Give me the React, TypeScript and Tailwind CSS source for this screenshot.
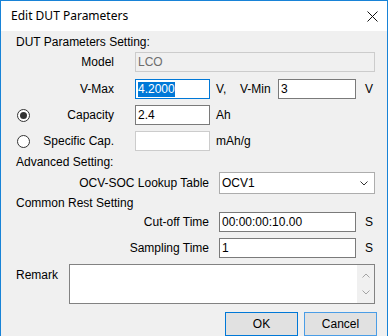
import React from "react";

const Radio = ({ checked }: { checked?: boolean }) => (
  <div className="w-[13px] h-[13px] rounded-full border border-[#333333] bg-white flex items-center justify-center shrink-0">
    {checked && <div className="w-[7px] h-[7px] rounded-full bg-[#333333]" />}
  </div>
);

const Input = ({
  w,
  children,
  disabled,
  focused,
  bg,
}: {
  w: string;
  children?: React.ReactNode;
  disabled?: boolean;
  focused?: boolean;
  bg?: string;
}) => (
  <div
    className={`${w} h-[20px] border flex items-center pl-[2px] shrink-0 ${
      focused ? "border-[#0078d7] bg-white" : disabled ? "border-[#cccccc]" : "border-[#7a7a7a] bg-white"
    } ${bg ?? ""}`}
  >
    {children}
  </div>
);

export default function App() {
  return (
    <div
      className="w-[388px] h-[336px] bg-[#f0f0f0] border-l border-r border-t border-[#1883d7] overflow-hidden flex flex-col text-[12px] text-black leading-[14px]"
      style={{ fontFamily: '"Liberation Sans", Arial, sans-serif' }}
    >
      {/* Title bar */}
      <div className="h-[30px] bg-white flex items-center justify-between shrink-0">
        <span
          className="pl-[10px] text-[12px] text-black"
          style={{ fontFamily: '"Noto Sans", "Open Sans", sans-serif' }}
        >
          Edit DUT Parameters
        </span>
        <svg width="11" height="11" viewBox="0 0 11 11" className="mr-[9px]">
          <path d="M0.5 0.5 L10.5 10.5 M10.5 0.5 L0.5 10.5" stroke="#111" strokeWidth="1" />
        </svg>
      </div>

      {/* Body */}
      <div className="flex flex-col">
        <div className="mt-[4px] h-[14px] pl-[15px]">DUT Parameters Setting:</div>

        {/* Model */}
        <div className="mt-[3px] h-[20px] flex items-center">
          <div className="w-[113px] text-right">Model</div>
          <div className="ml-[21px]">
            <Input w="w-[240px]" disabled>
              <span className="text-[#6d6d6d]">LCO</span>
            </Input>
          </div>
        </div>

        {/* V-Max */}
        <div className="mt-[7px] h-[20px] flex items-center">
          <div className="w-[113px] text-right">V-Max</div>
          <div className="ml-[21px]">
            <Input w="w-[75px]" focused>
              <span className="bg-[#0078d7] text-white leading-[15px] inline-block">4.2000</span>
            </Input>
          </div>
          <div className="ml-[6px] w-[24px]">V,</div>
          <div className="w-[38px]">V-Min</div>
          <Input w="w-[78px]">
            <span>3</span>
          </Input>
          <div className="ml-[9px]">V</div>
        </div>

        {/* Capacity */}
        <div className="mt-[6px] h-[20px] flex items-center">
          <div className="w-[113px] flex items-center pl-[16px]">
            <Radio checked />
            <div className="flex-1 text-right">Capacity</div>
          </div>
          <div className="ml-[21px]">
            <Input w="w-[75px]">
              <span>2.4</span>
            </Input>
          </div>
          <div className="ml-[6px]">Ah</div>
        </div>

        {/* Specific Cap */}
        <div className="mt-[6px] h-[20px] flex items-center">
          <div className="w-[113px] flex items-center pl-[16px]">
            <Radio />
            <div className="flex-1 text-right">Specific Cap.</div>
          </div>
          <div className="ml-[21px]">
            <Input w="w-[75px]" disabled bg="bg-white" />
          </div>
          <div className="ml-[6px]">mAh/g</div>
        </div>

        <div className="mt-[4px] h-[14px] pl-[15px]">Advanced Setting:</div>

        {/* OCV */}
        <div className="mt-[3px] h-[22px] flex items-center">
          <div className="w-[208px] text-right">OCV-SOC Lookup Table</div>
          <div className="ml-[10px] w-[156px] h-[22px] border border-[#adadad] bg-white flex items-center justify-between pl-[2px] pr-[6px]">
            <span>OCV1</span>
            <svg width="8" height="5" viewBox="0 0 8 5">
              <path d="M0.5 0.5 L4 4 L7.5 0.5" stroke="#333" strokeWidth="1" fill="none" />
            </svg>
          </div>
        </div>

        <div className="mt-[2px] h-[14px] pl-[15px]">Common Rest Setting</div>

        {/* Cut-off */}
        <div className="mt-[2px] h-[20px] flex items-center">
          <div className="w-[208px] text-right">Cut-off Time</div>
          <div className="ml-[10px]">
            <Input w="w-[137px]">
              <span>00:00:00:10.00</span>
            </Input>
          </div>
          <div className="ml-[9px]">S</div>
        </div>

        {/* Sampling */}
        <div className="mt-[6px] h-[20px] flex items-center">
          <div className="w-[208px] text-right">Sampling Time</div>
          <div className="ml-[10px]">
            <Input w="w-[137px]">
              <span>1</span>
            </Input>
          </div>
          <div className="ml-[9px]">S</div>
        </div>

        {/* Remark */}
        <div className="mt-[6px] h-[40px] flex">
          <div className="w-[68px] pl-[15px] pt-[4px]">Remark</div>
          <div className="w-[306px] h-[40px] border border-[#828282] bg-white flex justify-end">
            <div className="w-[17px] h-full bg-[#f0f0f0] flex flex-col items-center justify-between py-[8px]">
              <svg width="8" height="5" viewBox="0 0 8 5">
                <path d="M0.5 4.5 L4 1 L7.5 4.5" stroke="#a3a3a3" strokeWidth="1" fill="none" />
              </svg>
              <svg width="8" height="5" viewBox="0 0 8 5">
                <path d="M0.5 0.5 L4 4 L7.5 0.5" stroke="#a3a3a3" strokeWidth="1" fill="none" />
              </svg>
            </div>
          </div>
        </div>

        {/* Buttons */}
        <div className="mt-[8px] h-[24px] flex justify-end pr-[10px] gap-[6px]">
          <div className="w-[73px] h-[24px] border border-[#0078d7] bg-[#e1e1e1] flex items-center justify-center">
            OK
          </div>
          <div className="w-[73px] h-[24px] border border-[#4a9de6] bg-[#e1e1e1] flex items-center justify-center">
            Cancel
          </div>
        </div>
      </div>
    </div>
  );
}
